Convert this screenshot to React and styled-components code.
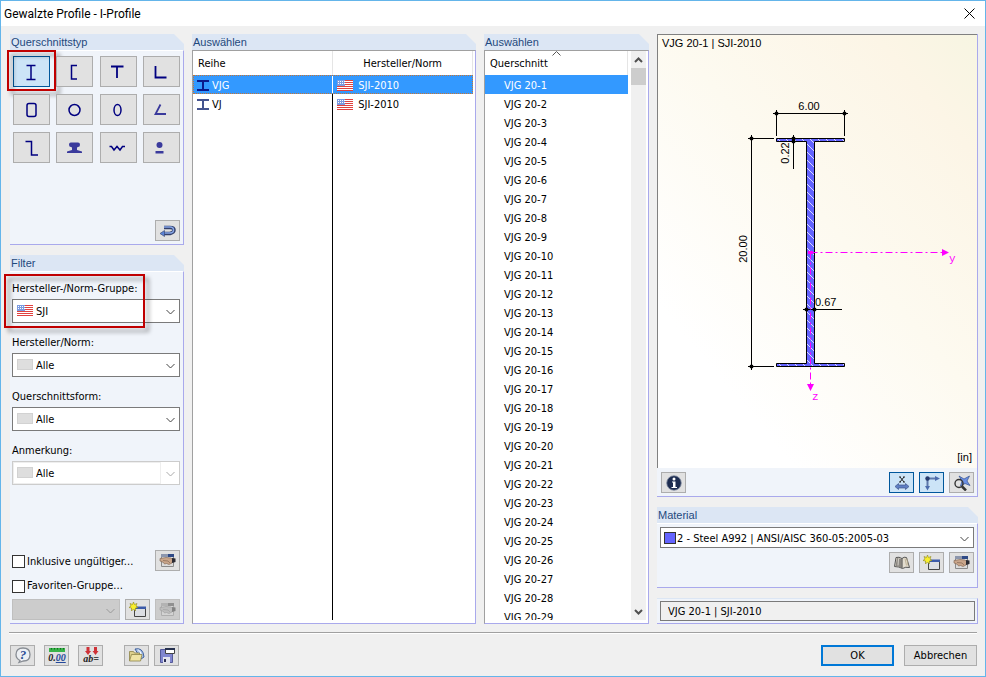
import React from "react";
import styled, { createGlobalStyle, css } from "styled-components";

const TYPES = [
  {
    name: "I-Profile",
    icon: <path d="M5.500 4.500h9M5.500 18.500h9M10 4v15" />,
  },
  { name: "U-Profile", icon: <path d="M13 4.500H7.500v13.500H13" /> },
  { name: "T-Profile", icon: <path d="M4 5.500h12.500M10 5v12" strokeWidth="1.800" /> },
  { name: "Winkel", icon: <path d="M5.500 5v11.500h11" strokeWidth="1.800" /> },
  {
    name: "Rechteckrohr",
    icon: <rect x="6" y="4.500" width="9" height="13" rx="2" />,
  },
  { name: "Rundrohr", icon: <circle cx="10.500" cy="11" r="5.500" /> },
  {
    name: "Ovalrohr",
    icon: <ellipse cx="10.500" cy="11" rx="3.500" ry="5.500" />,
  },
  {
    name: "Winkel, schräg",
    icon: <path d="M10.500 5.500l-5 9.500h10.500" stroke="#3a3a9c" strokeWidth="1.800" />,
  },
  { name: "Z-Profile", icon: <path d="M4.500 4.500h6v13.500h6.500" /> },
  {
    name: "Schiene",
    icon: (
      <path
        d="M7 5.500h7q2 0 2 2.200T14 10l-1 .5v2.500l5 1.500V16H3v-1.500l5-1.500v-2.500L7 10q-2 0-2-2.300T7 5.500z"
        fill="#3a3a9c"
        stroke="none"
      />
    ),
  },
  {
    name: "Wellblech",
    icon: <path d="M2.500 9.500h2l2.500 3.500 3-3.500 3 3.500 2.500-3.500h2.500" />,
  },
  {
    name: "Rundstahl",
    icon: (
      <g fill="#3a3a9c" stroke="none">
        <circle cx="9.500" cy="8" r="3" />
        <path d="M5.500 14h8v2.500h-8z" />
      </g>
    ),
  },
];

const SECTIONS = Array.from({ length: 29 }, (_, i) => `VJG 20-${i + 1}`);

const SERIES = [
  { name: "VJG", norm: "SJI-2010" },
  { name: "VJ", norm: "SJI-2010" },
];

function Flag() {
  return (
    <svg width="16" height="11" viewBox="0 0 16 11" aria-hidden="true">
      <rect width="16" height="11" fill="#fff" />
      <path
        d="M0 .5h16M0 2.500h16M0 4.500h16M0 6.500h16M0 8.500h16M0 10.500h16"
        stroke="#e0413f"
      />
      <rect width="8" height="6" fill="#7b9be0" />
      <path d="M1 1.500h7M1 3.500h7" stroke="#fff" strokeDasharray="1 1" />
    </svg>
  );
}

function Blank() {
  return (
    <svg width="16" height="11" viewBox="0 0 16 11" aria-hidden="true">
      <rect x=".5" y=".5" width="15" height="10" fill="#dedede" stroke="#d2d2d2" />
    </svg>
  );
}

function Chevron() {
  return (
    <svg width="9" height="6" viewBox="0 0 9 6" fill="none" aria-hidden="true">
      <path d="M.5 1l4 4 4-4" stroke="currentColor" />
    </svg>
  );
}

function Beam({ color }) {
  return (
    <svg width="12" height="11" viewBox="0 0 12 11" aria-hidden="true">
      <path d="M0 1h12M0 10h12M6 1v9" stroke={color} strokeWidth="2" />
    </svg>
  );
}

function HandIcon() {
  return (
    <svg width="18" height="16" viewBox="0 0 18 16" aria-hidden="true">
      <path d="M2.500 2.500h12v11h-12z" fill="#dcdcdc" stroke="#8a8a8a" />
      <path d="M2 1h7v3H2z" fill="#8c96ad" />
      <path d="M9 1h6v3H9z" fill="#2f4a86" />
      <path
        d="M1 5.500l6-1 5 .5 2 2-1 3-3 1.500-2.500-1-2 .5-1-1.500L1 8z"
        fill="#c9a58a"
        stroke="#7a5f4c"
        strokeWidth=".6"
      />
      <path d="M4 7.500l5 .5 2 2" fill="none" stroke="#7a5f4c" strokeWidth=".6" />
      <path d="M13 5l3.500.5V9L13 10z" fill="#2b2b33" />
    </svg>
  );
}

function NewIcon() {
  return (
    <svg width="18" height="16" viewBox="0 0 18 16" aria-hidden="true">
      <path d="M5.500 5.500h11v9h-11z" fill="#dcdee3" stroke="#444" />
      <path d="M6 4.500h11V7H6z" fill="#3c5ba8" />
      <path
        d="M4.500 0l1 2.500L8 1.500 7 4l2 1.500-2.500.5L6.500 9l-2-2-2 2V6L0 5.500 2 4 1 1.500l2.500 1z"
        fill="#f8ee2c"
        stroke="#8c8420"
        strokeWidth=".6"
      />
    </svg>
  );
}

function ReturnIcon() {
  return (
    <svg width="18" height="14" viewBox="0 0 18 14" fill="none" aria-hidden="true">
      <path d="M5 3.500h6q4 0 4 2.500t-4 3.500H5" stroke="#34406b" strokeWidth="3.500" />
      <path d="M5 3h6q3.500 0 3.500 3T11 9H5" stroke="#86a5e6" strokeWidth="1.500" />
      <path d="M1 9.500l4.500-3v6z" fill="#5b83d6" stroke="#34406b" strokeWidth=".6" />
    </svg>
  );
}

function HelpIcon() {
  return (
    <svg width="18" height="18" viewBox="0 0 18 18" aria-hidden="true">
      <path
        d="M9 2q7 0 7 6.500T9.500 15L5 16.500l1-2Q2 12.500 2 8.500 2 2 9 2z"
        fill="#eceff3"
        stroke="#878c93"
        strokeWidth="1.300"
      />
      <text
        x="9"
        y="13"
        textAnchor="middle"
        fontFamily="Liberation Serif, serif"
        fontStyle="italic"
        fontWeight="700"
        fontSize="13"
        fill="#2a4c93"
      >
        ?
      </text>
    </svg>
  );
}

function UnitsIcon() {
  return (
    <svg width="20" height="18" viewBox="0 0 20 18" aria-hidden="true">
      <path d="M2 2h16v4H2z" fill="#38b449" />
      <path
        d="M4.500 2v1.500M7.500 2v1.500M10.500 2v1.500M13.500 2v1.500M16.500 2v1.500"
        stroke="#126a20"
      />
      <text
        x="10"
        y="15"
        textAnchor="middle"
        fontFamily="Liberation Serif, serif"
        fontStyle="italic"
        fontWeight="700"
        fontSize="10"
        fill="#222"
      >
        0.
        <tspan fill="#24489a" textDecoration="underline">
          00
        </tspan>
      </text>
    </svg>
  );
}

function RenameIcon() {
  return (
    <svg width="20" height="18" viewBox="0 0 20 18" aria-hidden="true">
      <path
        d="M5.500 1h3v4h1.500L7 9 4 5h1.500zM13 1h3v4h1.500l-3 4-3-4H13z"
        fill="#cf3136"
      />
      <text
        x="10"
        y="16"
        textAnchor="middle"
        fontFamily="Liberation Serif, serif"
        fontStyle="italic"
        fontWeight="700"
        fontSize="10"
        fill="#222"
      >
        ab=
      </text>
    </svg>
  );
}

function FolderIcon() {
  return (
    <svg width="18" height="16" viewBox="0 0 18 16" aria-hidden="true">
      <path d="M7 2q8-2 9 8l-3 2z" fill="#a9c2e8" stroke="#3d5f9c" />
      <path d="M10 2.500q3 2 3.500 6" fill="none" stroke="#fff" />
      <path d="M1.500 13.500v-9h4l1 1.500h5v7.500z" fill="#ddd08c" stroke="#8d8447" strokeWidth=".8" />
      <path d="M1.500 14l2-6.500h10.500L12.500 14z" fill="#efe4a4" stroke="#8d8447" strokeWidth=".8" />
    </svg>
  );
}

function SaveIcon() {
  return (
    <svg width="18" height="17" viewBox="0 0 18 17" aria-hidden="true">
      <path d="M2.500 2.500h12v13h-12z" fill="#8086cf" stroke="#555a9a" />
      <path d="M5 10h7v6H5z" fill="#e3e4ee" />
      <path d="M6 12h2v3H6z" fill="#2c2f55" />
      <path d="M7.500 1.500h9v5h-9z" fill="#fff" stroke="#444" />
      <path d="M7 1h10v2H7z" fill="#26314f" />
    </svg>
  );
}

function InfoIcon() {
  return (
    <svg width="16" height="16" viewBox="0 0 16 16" aria-hidden="true">
      <circle cx="8" cy="8" r="7.300" fill="#1d2c50" stroke="#8790a5" strokeWidth=".8" />
      <circle cx="8" cy="4" r="1.500" fill="#fff" />
      <path d="M6 6.500h3.500V12H11v1H5.500v-1H7V7.500H6z" fill="#fff" />
    </svg>
  );
}

function DimIcon() {
  return (
    <svg width="18" height="16" viewBox="0 0 18 16" fill="none" aria-hidden="true">
      <path d="M7 2l4 5M11 2L7 7M6 2h2M10 2h2M6 7h2M10 7h2" stroke="#222" />
      <path
        d="M2 11.500l3.500-3V10h7V8.500l3.500 3-3.500 3V13h-7v1.500z"
        fill="#5f7fc4"
        stroke="#3f568c"
        strokeWidth=".7"
      />
    </svg>
  );
}

function AxesIcon() {
  return (
    <svg width="18" height="16" viewBox="0 0 18 16" fill="none" aria-hidden="true">
      <path d="M4.500 3v9M4 3.500h9" stroke="#5f78ab" strokeWidth="2" />
      <path d="M12 1l5 2.500L12 6zM2 11l2.500 4.500L7 11z" fill="#4d6cae" />
      <circle cx="4.500" cy="3.500" r="2.200" fill="#26396c" />
    </svg>
  );
}

function ZoomIcon() {
  return (
    <svg width="18" height="16" viewBox="0 0 18 16" fill="none" aria-hidden="true">
      <path
        d="M6 1l5 3 5.500-3L14 6l3 4.500-5-2L7.500 11 9 6z"
        fill="#6c90e4"
        stroke="#34508f"
        strokeWidth=".7"
      />
      <circle cx="6" cy="8.500" r="4" stroke="#333" strokeWidth="1.400" />
      <path d="M9 11.500l4 4" stroke="#333" strokeWidth="2.500" />
    </svg>
  );
}

function BookIcon() {
  return (
    <svg width="18" height="16" viewBox="0 0 18 16" aria-hidden="true">
      <path
        d="M1.500 11.500L3 2.500q3-1 6 1 2-2 4.500-1l3 10q-4-1-7 1Q6 11.500 1.500 11.500z"
        fill="#e3ddcf"
        stroke="#555"
      />
      <path d="M2.500 11L4 3l4.500 1v8.500z" fill="#8b8781" />
      <path d="M5.500 3.500l-.5 7" stroke="#d8d4cc" />
      <path d="M9 3.500V13" stroke="#444" />
      <path d="M12 3.500l1.500 7M14 3.500l1 7" stroke="#b7a98a" strokeWidth=".8" />
    </svg>
  );
}

function SectionDrawing() {
  return (
    <Drawing viewBox="0 0 319 433" role="img" aria-label="VJG 20-1">
      <defs>
        <pattern id="hatch" width="8" height="8" patternUnits="userSpaceOnUse">
          <rect width="8" height="8" fill="#6464ff" />
          <path d="M-1-1l10 10M-1 7l2 2M7-1l2 2" stroke="#d8d8ff" />
        </pattern>
      </defs>
      <path
        d="M118.500 103.500h68v3h-30v222h30v3h-68v-3h30v-222h-30z"
        fill="url(#hatch)"
        stroke="#000"
      />
      <g stroke="#000">
        <path d="M115 78.500h75M118.500 75v26M186.500 75v26" />
        <path d="M93.500 100v235M90 103.500h26M90 331.500h26" />
        <path d="M135.500 100v34M145 274.500h39" />
      </g>
      <g>
        <Dot cx="118.500" cy="78.500" r="2" />
        <Dot cx="186.500" cy="78.500" r="2" />
        <Dot cx="93.500" cy="103.500" r="2" />
        <Dot cx="93.500" cy="331.500" r="2" />
        <Dot cx="135.500" cy="103.500" r="2" />
        <Dot cx="135.500" cy="106.500" r="2" />
        <Dot cx="148.500" cy="274.500" r="2" />
        <Dot cx="156.500" cy="274.500" r="2" />
      </g>
      <g stroke="#f0f" strokeDasharray="7 3 2 3">
        <path d="M152.500 217.500H285M152.500 217.500V350" />
      </g>
      <path
        d="M284 214l7 3.500-7 3.500zM149 349h7l-3.500 7zM150 216h5v3h-5z"
        fill="#f0f"
      />
      <text x="151" y="75" textAnchor="middle">
        6.00
      </text>
      <text x="157" y="271">
        0.67
      </text>
      <text textAnchor="middle" transform="translate(131 118) rotate(-90)">
        0.22
      </text>
      <text textAnchor="middle" transform="translate(89 214) rotate(-90)">
        20.00
      </text>
      <AxisLabel x="291" y="227">
        y
      </AxisLabel>
      <AxisLabel x="154" y="365">
        z
      </AxisLabel>
    </Drawing>
  );
}

function Field({ id, label, value, icon, disabled }) {
  return (
    <FieldBox>
      <FieldLabel htmlFor={id}>{label}</FieldLabel>
      <Combo $disabled={disabled}>
        <ComboIcon>{icon}</ComboIcon>
        <Select id={id} disabled={disabled} $inset={disabled} defaultValue={value}>
          <option>{value}</option>
        </Select>
        <Arrow>
          <Chevron />
        </Arrow>
      </Combo>
    </FieldBox>
  );
}

export default function App() {
  return (
    <Dialog>
      <GlobalStyle />
      <TitleBar>
        <h1>Gewalzte Profile - I-Profile</h1>
        <CloseButton aria-label="Schließen">
          <svg width="11" height="11" viewBox="0 0 11 11">
            <path d="M.5.5l10 10M10.500.5l-10 10" stroke="#000" />
          </svg>
        </CloseButton>
      </TitleBar>

      <Content>
        <Column>
          <TypeGroup>
            <GroupTitle>Querschnittstyp</GroupTitle>
            <GroupBody>
              <TypeGrid>
                {TYPES.map((type, i) => (
                  <TypeCell key={type.name}>
                    <TypeButton $active={i === 0} aria-label={type.name}>
                      <svg
                        width="22"
                        height="22"
                        viewBox="0 0 22 22"
                        fill="none"
                        stroke="#000080"
                        strokeWidth="1.500"
                      >
                        {type.icon}
                      </svg>
                    </TypeButton>
                    {i === 0 && <TypeMarker />}
                  </TypeCell>
                ))}
              </TypeGrid>
              <BottomRight>
                <ToolButton aria-label="Zurück">
                  <ReturnIcon />
                </ToolButton>
              </BottomRight>
            </GroupBody>
          </TypeGroup>

          <FillGroup>
            <GroupTitle>Filter</GroupTitle>
            <GroupBody>
              <Fields>
                <Marked>
                  <Field
                    id="group"
                    label="Hersteller-/Norm-Gruppe:"
                    value="SJI"
                    icon={<Flag />}
                  />
                  <FieldMarker />
                </Marked>
                <Field id="norm" label="Hersteller/Norm:" value="Alle" icon={<Blank />} />
                <Field id="shape" label="Querschnittsform:" value="Alle" icon={<Blank />} />
                <Field id="note" label="Anmerkung:" value="Alle" icon={<Blank />} disabled />
              </Fields>
              <Options>
                <OptionRow>
                  <Check>
                    <input type="checkbox" />
                    Inklusive ungültiger...
                  </Check>
                  <ToolButton aria-label="Filter bearbeiten">
                    <HandIcon />
                  </ToolButton>
                </OptionRow>
                <OptionRow>
                  <Check>
                    <input type="checkbox" />
                    Favoriten-Gruppe...
                  </Check>
                </OptionRow>
                <FavoriteRow>
                  <FavoriteCombo>
                    <Select disabled aria-label="Favoriten-Gruppe" />
                    <Arrow>
                      <Chevron />
                    </Arrow>
                  </FavoriteCombo>
                  <ToolButton aria-label="Neue Gruppe">
                    <NewIcon />
                  </ToolButton>
                  <ToolButton aria-label="Gruppe bearbeiten" disabled>
                    <HandIcon />
                  </ToolButton>
                </FavoriteRow>
              </Options>
            </GroupBody>
          </FillGroup>
        </Column>

        <FillGroup>
          <GroupTitle>Auswählen</GroupTitle>
          <ListBody>
            <SeriesBox>
              <SeriesTable>
                <thead>
                  <tr>
                    <th>Reihe</th>
                    <th>Hersteller/Norm</th>
                  </tr>
                </thead>
                <tbody>
                  {SERIES.map((row, i) => (
                    <SeriesRow key={row.name} $selected={i === 0}>
                      <td>
                        <Cell>
                          <Beam color={i === 0 ? "#0a1a8c" : "#44548f"} />
                          {row.name}
                        </Cell>
                      </td>
                      <td>
                        <Cell $wide>
                          <Flag />
                          {row.norm}
                        </Cell>
                      </td>
                    </SeriesRow>
                  ))}
                  <FillerRow>
                    <td />
                    <td />
                  </FillerRow>
                </tbody>
              </SeriesTable>
            </SeriesBox>
          </ListBody>
        </FillGroup>

        <FillGroup>
          <GroupTitle>Auswählen</GroupTitle>
          <ListBody>
            <SectionBox>
              <SectionTable>
                <thead>
                  <tr>
                    <th>
                      Querschnitt
                      <SortMark viewBox="0 0 9 5">
                        <path d="M.5 4.500l4-4 4 4" fill="none" stroke="#555" />
                      </SortMark>
                    </th>
                  </tr>
                </thead>
                <tbody>
                  {SECTIONS.map((name, i) => (
                    <SectionRow key={name} $selected={i === 0}>
                      <td>{name}</td>
                    </SectionRow>
                  ))}
                </tbody>
              </SectionTable>
            </SectionBox>
            <ScrollBar>
              <ScrollButton aria-label="Nach oben">
                <svg width="9" height="6" viewBox="0 0 9 6" fill="none">
                  <path d="M1 5l3.500-3.500L8 5" stroke="#505050" strokeWidth="2" />
                </svg>
              </ScrollButton>
              <Thumb />
              <ScrollButton aria-label="Nach unten">
                <svg width="9" height="6" viewBox="0 0 9 6" fill="none">
                  <path d="M1 1l3.500 3.500L8 1" stroke="#505050" strokeWidth="2" />
                </svg>
              </ScrollButton>
            </ScrollBar>
          </ListBody>
        </FillGroup>

        <Column>
          <PreviewGroup>
            <Canvas>
              <CanvasText>VJG 20-1 | SJI-2010</CanvasText>
              <SectionDrawing />
              <CanvasUnit>[in]</CanvasUnit>
            </Canvas>
            <Tools>
              <ToolButton aria-label="Info">
                <InfoIcon />
              </ToolButton>
              <Spacer />
              <ToolButton $active aria-label="Bemaßung">
                <DimIcon />
              </ToolButton>
              <ToolButton $active aria-label="Achsen">
                <AxesIcon />
              </ToolButton>
              <ToolButton aria-label="Alles zeigen">
                <ZoomIcon />
              </ToolButton>
            </Tools>
          </PreviewGroup>

          <MaterialGroup>
            <GroupTitle>Material</GroupTitle>
            <MaterialBody>
              <MaterialCombo>
                <Swatch />
                <Select aria-label="Material" defaultValue="2">
                  <option value="2">2 - Steel A992 | ANSI/AISC 360-05:2005-03</option>
                </Select>
                <Arrow>
                  <Chevron />
                </Arrow>
              </MaterialCombo>
              <MaterialTools>
                <ToolButton aria-label="Bibliothek">
                  <BookIcon />
                </ToolButton>
                <ToolButton aria-label="Neues Material">
                  <NewIcon />
                </ToolButton>
                <ToolButton aria-label="Material bearbeiten">
                  <HandIcon />
                </ToolButton>
              </MaterialTools>
            </MaterialBody>
          </MaterialGroup>

          <ResultGroup>
            <ResultInput readOnly aria-label="Profil" value="VJG 20-1 | SJI-2010" />
          </ResultGroup>
        </Column>
      </Content>

      <Footer>
        <ToolSet>
          <ToolButton aria-label="Hilfe">
            <HelpIcon />
          </ToolButton>
          <ToolButton aria-label="Einheiten">
            <UnitsIcon />
          </ToolButton>
          <ToolButton aria-label="Umbenennen">
            <RenameIcon />
          </ToolButton>
        </ToolSet>
        <FileSet>
          <ToolButton aria-label="Öffnen">
            <FolderIcon />
          </ToolButton>
          <ToolButton aria-label="Speichern">
            <SaveIcon />
          </ToolButton>
        </FileSet>
        <Spacer />
        <DialogButton $primary>OK</DialogButton>
        <DialogButton>Abbrechen</DialogButton>
      </Footer>
    </Dialog>
  );
}

const GlobalStyle = createGlobalStyle`
  * {
    box-sizing: border-box;
  }
  body {
    margin: 0;
    font: 11px/16px "DejaVu Sans Condensed", sans-serif;
    color: #000;
  }
  button,
  select,
  input {
    margin: 0;
    padding: 0;
    font: inherit;
    color: inherit;
  }
  svg {
    display: block;
    flex: none;
  }
`;

const Dialog = styled.div`
  display: flex;
  flex-direction: column;
  height: 100vh;
  min-height: 600px;
  background: #f0f0f0;
  border: 1px solid #64b5ea;
  overflow: hidden;
`;

const TitleBar = styled.header`
  display: flex;
  align-items: center;
  justify-content: space-between;
  height: 25px;
  padding: 0 10px 0 3px;
  background: #fff;
  h1 {
    margin: 0;
    font: 12px/16px Roboto, sans-serif;
  }
`;

const CloseButton = styled.button`
  border: 0;
  background: none;
`;

const Content = styled.main`
  flex: 1;
  min-height: 0;
  display: grid;
  grid-template-columns: 174px minmax(0, 284fr) 165px minmax(0, 321fr);
  grid-template-rows: minmax(0, 1fr);
  gap: 8px;
  margin: 8px 7px 0 9px;
  padding-bottom: 8px;
`;

const Column = styled.div`
  display: flex;
  flex-direction: column;
  gap: 10px;
  min-height: 0;
`;

const Group = styled.section`
  display: flex;
  flex-direction: column;
  min-height: 0;
`;

const TypeGroup = styled(Group)`
  height: 211px;
`;

const FillGroup = styled(Group)`
  flex: 1;
`;

const GroupTitle = styled.h2`
  margin: 0;
  padding-left: 1px;
  background: #dce6f4;
  color: #1f497d;
  font: 11px/16px "Liberation Sans", sans-serif;
  clip-path: polygon(0 0, calc(100% - 10px) 0, 100% 10px, 100% 100%, 0 100%);
`;

const frame = css`
  border: solid #a9a9ec;
  border-width: 0 1px 1px 0;
  background: #f0f4fa;
`;

const GroupBody = styled.div`
  ${frame}
  flex: 1;
  display: flex;
  flex-direction: column;
  justify-content: space-between;
  min-height: 0;
  padding: 5px 3px 3px 2px;
  border-top: 1px solid #fff;
`;

const TypeGrid = styled.div`
  display: grid;
  grid-template-columns: repeat(4, 37px);
  justify-content: space-between;
  gap: 7px 6px;
  padding-left: 1px;
`;

const TypeCell = styled.div`
  position: relative;
`;

const active = css`
  border-color: #00579c;
  background: #cce4f7;
`;

const BaseButton = styled.button`
  display: flex;
  align-items: center;
  justify-content: center;
  border: 1px solid #adadad;
  background: #e1e1e1;
  ${(props) => props.$active && active}
`;

const TypeButton = styled(BaseButton)`
  width: 100%;
  height: 31px;
`;

const ToolButton = styled(BaseButton)`
  flex: none;
  width: 25px;
  height: 21px;
  &:disabled {
    background: #ccc;
    border-color: #bfbfbf;
  }
  &:disabled svg {
    filter: grayscale(1);
    opacity: 0.45;
  }
`;

const Marker = styled.div`
  position: absolute;
  border: 2px solid #c00000;
  filter: drop-shadow(4px 4px 2px rgba(0, 0, 0, 0.4));
  pointer-events: none;
`;

const TypeMarker = styled(Marker)`
  inset: -6px -6px -4px;
`;

const FieldMarker = styled(Marker)`
  top: -6px;
  bottom: -5px;
  left: -8px;
  width: 141px;
`;

const BottomRight = styled.div`
  display: flex;
  justify-content: flex-end;
`;

const Fields = styled.div`
  display: flex;
  flex-direction: column;
  gap: 11px;
  padding-top: 3px;
`;

const Marked = styled.div`
  position: relative;
`;

const FieldBox = styled.div`
  display: flex;
  flex-direction: column;
  gap: 2px;
`;

const FieldLabel = styled.label`
  padding-top: 1px;
`;

const Combo = styled.div`
  position: relative;
  height: 24px;
  border: 1px solid ${(props) => (props.$disabled ? "#ccc" : "#7a7a7a")};
  background: #fff;
  color: ${(props) => (props.$disabled ? "#aaa" : "#444")};
`;

const ComboIcon = styled.span`
  position: absolute;
  top: 5px;
  left: 4px;
`;

const Arrow = styled.span`
  position: absolute;
  top: calc(50% - 2px);
  right: 4px;
  pointer-events: none;
`;

const Select = styled.select`
  appearance: none;
  display: block;
  width: 100%;
  height: 100%;
  padding: 1px 0 0 23px;
  border: 0;
  background: none;
  color: #000;
  opacity: 1;
  ${(props) =>
    props.$inset &&
    css`
      width: calc(100% - 18px);
      border: 1px solid #eee;
      padding-left: 22px;
    `}
`;

const Options = styled.div`
  display: flex;
  flex-direction: column;
  gap: 5px;
`;

const OptionRow = styled.div`
  display: flex;
  align-items: center;
  justify-content: space-between;
`;

const Check = styled.label`
  display: flex;
  align-items: center;
  gap: 2px;
  padding-top: 2px;
  white-space: nowrap;
  input {
    appearance: none;
    width: 13px;
    height: 13px;
    border: 1px solid #333;
    background: #fff;
  }
`;

const FavoriteRow = styled.div`
  display: flex;
  gap: 5px;
`;

const FavoriteCombo = styled(Combo)`
  flex: 1;
  height: 21px;
  border-color: #bfbfbf;
  background: #ccc;
  color: #999;
`;

const ListBody = styled.div`
  ${frame}
  flex: 1;
  display: flex;
  min-height: 0;
  padding: 0 2px 3px 0;
  border-top: 1px solid #a0a0a0;
  border-left: 1px solid #a0a0a0;
  background: #fff;
`;

const SeriesBox = styled.div`
  flex: 1;
  display: flex;
`;

const tableBase = css`
  width: 100%;
  border-collapse: collapse;
  table-layout: fixed;
  th {
    height: 24px;
    padding: 2px 0 0;
    font-weight: 400;
  }
  td {
    height: 19px;
    padding: 2px 0 0;
  }
`;

const SeriesTable = styled.table`
  ${tableBase}
  height: 100%;
  th {
    border-right: 1px solid #e5e5e5;
  }
  th:first-child {
    padding-left: 5px;
    text-align: left;
  }
  td:first-child {
    border-right: 1px solid #000;
  }
`;

const SeriesRow = styled.tr`
  ${(props) =>
    props.$selected &&
    css`
      background: #3399ff;
      color: #fff;
      outline: 1px dotted #c87533;
      outline-offset: -1px;
      td:first-child {
        border-right-color: #fff;
      }
    `}
`;

const FillerRow = styled.tr`
  td {
    height: auto;
  }
`;

const Cell = styled.div`
  display: flex;
  align-items: center;
  gap: ${(props) => (props.$wide ? "5px" : "3px")};
  padding-left: 4px;
`;

const SectionBox = styled.div`
  flex: 1;
  overflow: hidden;
`;

const SectionTable = styled.table`
  ${tableBase}
  th {
    position: relative;
    padding-left: 5px;
    border-right: 1px solid #e5e5e5;
    text-align: left;
  }
  td {
    padding-left: 19px;
  }
`;

const SortMark = styled.svg`
  position: absolute;
  top: 0;
  left: calc(50% - 4px);
  width: 9px;
  height: 5px;
`;

const SectionRow = styled.tr`
  ${(props) => props.$selected && "background: #3399ff; color: #fff;"}
`;

const ScrollBar = styled.div`
  display: flex;
  flex-direction: column;
  width: 15px;
  margin-left: 3px;
  background: #f0f0f0;
`;

const ScrollButton = styled.button`
  display: flex;
  align-items: center;
  justify-content: center;
  height: 17px;
  border: 0;
  background: none;
`;

const Thumb = styled.div`
  height: 17px;
  margin-bottom: auto;
  background: #cdcdcd;
`;

const PreviewGroup = styled(Group)`
  ${frame}
  flex: 1;
`;

const Canvas = styled.div`
  position: relative;
  flex: 1;
  min-height: 0;
  border-top: 1px solid #808080;
  border-left: 1px solid #808080;
  background: linear-gradient(50deg, #fff 20%, #fdfaf0 55%, #fcf5e6 85%, #f7f5e2);
  font: 11px/16px "Liberation Sans", sans-serif;
`;

const Drawing = styled.svg`
  width: 100%;
  height: 100%;
`;

const Dot = styled.circle`
  fill: #000;
`;

const AxisLabel = styled.text`
  fill: #f0f;
  font-family: "Liberation Mono", monospace;
`;

const CanvasText = styled.span`
  position: absolute;
  top: 0;
  left: 4px;
`;

const CanvasUnit = styled.span`
  position: absolute;
  right: 5px;
  bottom: 3px;
`;

const Tools = styled.div`
  display: flex;
  gap: 5px;
  padding: 4px 3px 3px 4px;
`;

const Spacer = styled.div`
  flex: 1;
`;

const MaterialGroup = styled(Group)`
  height: 81px;
`;

const MaterialBody = styled(GroupBody)`
  justify-content: flex-start;
  gap: 4px;
  padding: 3px;
`;

const MaterialCombo = styled(Combo)`
  height: 21px;
  select {
    padding: 2px 0 0 16px;
  }
`;

const Swatch = styled.span`
  position: absolute;
  top: 4px;
  left: 3px;
  width: 12px;
  height: 12px;
  border: 1px solid #333;
  background: #6464ff;
`;

const MaterialTools = styled.div`
  display: flex;
  justify-content: flex-end;
  gap: 5px;
`;

const ResultGroup = styled(Group)`
  ${frame}
  height: 26px;
  padding: 2px 2px 2px 3px;
  border-top: 1px solid #dce6f4;
`;

const ResultInput = styled.input`
  width: 100%;
  height: 20px;
  padding-left: 7px;
  border: 1px solid #7a7a7a;
  background: #f0f0f0;
`;

const Footer = styled.footer`
  display: flex;
  align-items: center;
  gap: 10px;
  height: 44px;
  margin: 0 8px;
  padding: 1px 0 0 1px;
  border-top: 1px solid #a0a0a0;
  box-shadow: inset 0 1px #fff;
`;

const ToolSet = styled.div`
  display: flex;
  gap: 9px;
`;

const FileSet = styled.div`
  display: flex;
  gap: 5px;
  margin-left: 11px;
`;

const DialogButton = styled(BaseButton)`
  width: 73px;
  height: 21px;
  padding-top: 2px;
  ${(props) => props.$primary && "border: 2px solid #0078d7;"}
`;
